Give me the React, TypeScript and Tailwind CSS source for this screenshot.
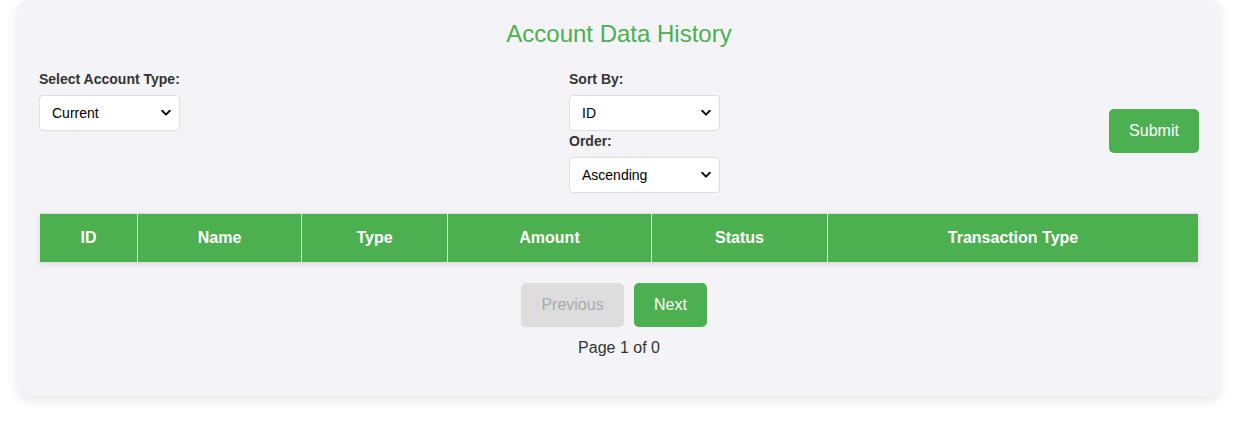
import React from "react";

const font = { fontFamily: '"Liberation Sans", Arial, sans-serif' };

function Chevron() {
  return (
    <svg width="10" height="7" viewBox="0 0 10 7" className="pointer-events-none absolute right-[9px] top-1/2 -translate-y-1/2">
      <path d="M1.2 1.3 L5 5.1 L8.8 1.3" fill="none" stroke="#111" strokeWidth="2" strokeLinecap="round" strokeLinejoin="round" />
    </svg>
  );
}

function Select({ value, width }: { value: string; width: string }) {
  return (
    <div className={`relative ${width} h-[36px]`}>
      <div className="flex h-full w-full items-center rounded-[4px] border border-[#dddde2] bg-white pl-3 text-[14px] text-black">
        {value}
      </div>
      <Chevron />
    </div>
  );
}

export default function App() {
  const cols = [
    { label: "ID", w: "w-[97px]" },
    { label: "Name", w: "w-[164px]" },
    { label: "Type", w: "w-[146px]" },
    { label: "Amount", w: "w-[204px]" },
    { label: "Status", w: "w-[176px]" },
    { label: "Transaction Type", w: "w-[371px]" },
  ];
  return (
    <div className="min-h-[426px] bg-white" style={font}>
      <div className="ml-[18px] w-[1202px] h-[396px] rounded-b-[10px] rounded-t-[10px] bg-[#f4f4f8] px-[21px] pt-[20px] shadow-[0_4px_12px_rgba(0,0,0,0.1)]">
        <h2 className="h-[27px] text-center text-[24px] leading-[27px] text-[#4caf50]">Account Data History</h2>
        <div className="mt-[24px] flex items-start justify-between">
          <div className="flex flex-col">
            <label className="h-[16px] text-[14px] font-bold leading-[16px] text-[#333]">Select Account Type:</label>
            <div className="mt-[8px]">
              <Select value="Current" width="w-[141px]" />
            </div>
          </div>
          <div className="flex flex-col">
            <label className="h-[16px] text-[14px] font-bold leading-[16px] text-[#333]">Sort By:</label>
            <div className="mt-[8px]">
              <Select value="ID" width="w-[151px]" />
            </div>
            <label className="mt-[2px] h-[16px] text-[14px] font-bold leading-[16px] text-[#333]">Order:</label>
            <div className="mt-[8px]">
              <Select value="Ascending" width="w-[151px]" />
            </div>
          </div>
          <button className="mt-[38px] h-[44px] w-[90px] rounded-[5px] bg-[#4caf50] text-[16px] text-white">Submit</button>
        </div>
        <div className="mx-px mt-[20px] flex shadow-[0_2px_6px_rgba(0,0,0,0.12)]">
          {cols.map((c, i) => (
            <div
              key={c.label}
              className={`${c.w} ${i === cols.length - 1 ? "flex-1" : ""} flex h-[49px] items-center justify-center border-t border-[#dddddd] bg-[#4caf50] text-[16px] font-bold text-white ${i > 0 ? "border-l border-l-[#d9eed9]" : ""}`}
            >
              {c.label}
            </div>
          ))}
        </div>
        <div className="mt-[21px] flex justify-center gap-[10px] pr-[10px]">
          <button className="h-[44px] w-[103px] rounded-[5px] bg-[#dddddd] text-[16px] text-[#aaaaaa]">Previous</button>
          <button className="h-[44px] w-[73px] rounded-[5px] bg-[#4caf50] text-[16px] text-white">Next</button>
        </div>
        <div className="mt-[12px] text-center text-[16px] leading-[18px] text-[#333]">Page 1 of 0</div>
      </div>
    </div>
  );
}
